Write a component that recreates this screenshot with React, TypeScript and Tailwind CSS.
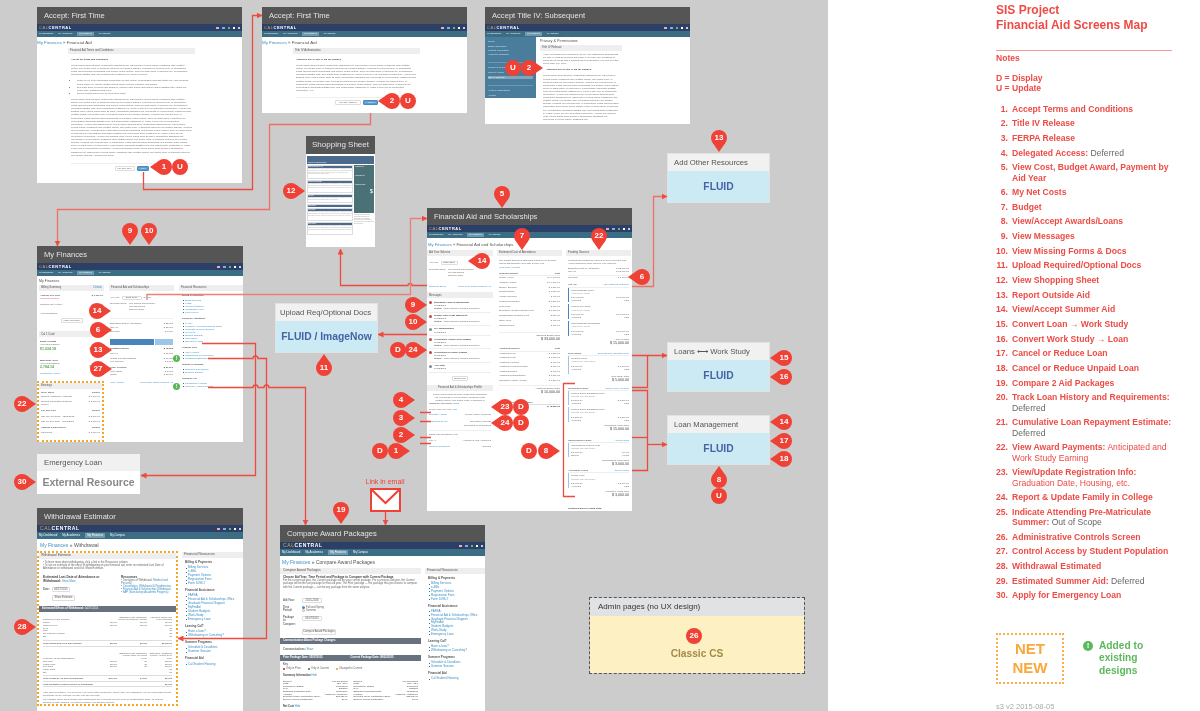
import React from 'react';
import clsx from 'clsx';

const LOREM =
  'Lorem ipsum dolor sit amet, consectetur adipiscing elit. Maecenas in viverra ipsum. Phasellus vitae porttitor metus, non auctor nulla. In tincidunt luctus mi non congue gravida. Vivamus nec pulvinar sem. In consectetur lectus rhoncus ligula malesuada, sed tempor neque dictum. Proin vel diam lacus, et rhoncus leo. Pellentesque accumsan sagittis eros, sed cursus tortor vestibulum in. Fusce a arcu nec mi elementum elementum. Aenean non sodales nunc. ';

const lorem = (n: number) => LOREM.repeat(Math.ceil(n / LOREM.length)).slice(0, n);

const Title: React.FC<{ children: React.ReactNode }> = ({ children }) => (
  <div className="h-[17px] shrink-0 bg-[#555555] pl-[7px] flex items-center text-[7.6px] text-[#e4e4e4]">
    {children}
  </div>
);

const CalNav: React.FC<{ large?: boolean }> = ({ large }) => (
  <div className="shrink-0">
    <div className="h-[7px] bg-[#2c3f66] flex items-center justify-between px-[1px]">
      <span className={clsx('font-bold tracking-[0.6px] text-white', large ? 'text-[5px] pl-[2px]' : 'text-[4px] pl-[1px]')}>
        <span className="font-normal text-[#c8a94e]">CAL</span>CENTRAL
      </span>
      <div className="flex items-center gap-[3px] pr-[1px]">
        <span className="w-[3px] h-[2px] bg-[#e6b0b0]" />
        <span className="w-[3px] h-[2px] bg-[#88aadd]" />
        <span className="w-[2px] h-[2px] bg-[#66bb66]" />
        <span className="w-[2px] h-[2px] bg-white" />
        <span className="w-[2px] h-[2px] rounded-full bg-white" />
      </div>
    </div>
    <div className={clsx('bg-[#3b6d85] flex items-center gap-[5px] pl-[2px] text-white', large ? 'h-[7px] text-[2.8px]' : 'h-[6px] text-[2.2px]')}>
      <span>My Dashboard</span>
      <span>My Academics</span>
      <span className="bg-[#6f9aad] px-[2px]">My Finances</span>
      <span>My Campus</span>
    </div>
  </div>
);

const Screen: React.FC<{ className: string; title: string; large?: boolean; children: React.ReactNode }> = ({
  className,
  title,
  large,
  children,
}) => (
  <div className={clsx('absolute bg-white overflow-hidden flex flex-col', className)}>
    <Title>{title}</Title>
    <CalNav large={large} />
    <div className="flex-1 min-h-0 text-[#666666] text-[2.4px] leading-[3.1px]">{children}</div>
  </div>
);

const Head: React.FC<{ right?: string; children: React.ReactNode; className?: string }> = ({ right, children, className }) => (
  <div className={clsx('h-[6px] bg-[#eeeeee] flex items-center justify-between px-[2px] text-[2.8px] text-[#555555]', className)}>
    <span>{children}</span>
    {right && <span className="text-[#3b8ec4]">{right}</span>}
  </div>
);

const Row: React.FC<{ l: string; r?: string; className?: string }> = ({ l, r, className }) => (
  <div className={clsx('flex justify-between', className)}>
    <span>{l}</span>
    <span>{r}</span>
  </div>
);

const Btn: React.FC<{ children: React.ReactNode; blue?: boolean; className?: string }> = ({ children, blue, className }) => (
  <span
    className={clsx(
      'inline-flex items-center justify-center rounded-[1px] border',
      blue ? 'bg-[#5a9bd0] border-[#4a8bc0] text-white' : 'bg-white border-[#dddddd] text-[#555555]',
      className,
    )}
  >
    {children}
  </span>
);

type Group = { name: string; links: string[] };

const Resources: React.FC<{ groups: Group[]; className?: string; headClass?: string }> = ({ groups, className, headClass }) => (
  <div className={className}>
    <Head className={headClass}>Financial Resources</Head>
    <div className="px-[3px] pt-[3px] flex flex-col gap-[3px]">
      {groups.map((g) => (
        <div key={g.name}>
          <div className="font-bold text-[#555555] mb-[1.5px]">{g.name}</div>
          {g.links.map((link) => (
            <div key={link} className="pl-[1px] flex items-center gap-[1px] text-[#3b8ec4]">
              <span className="w-[1px] h-[1px] bg-[#3b6d85] shrink-0" />
              {link}
            </div>
          ))}
        </div>
      ))}
    </div>
  </div>
);

const billing = { name: 'Billing & Payments', links: ['Billing Services', 'e-Bills', 'Payment Options', 'Registration Fees', 'Form 1098-T'] };
const assistance = {
  name: 'Financial Assistance',
  links: ['FAFSA', 'Financial Aid & Scholarships Office', 'Graduate Financial Support', 'MyFinAid', 'Student Budgets', 'Work-Study', 'Emergency Loan'],
};
const summer = { name: 'Summer Programs', links: ['Schedule & Deadlines', 'Summer Session'] };
const largeGroups = [
  billing,
  assistance,
  { name: 'Leaving Cal?', links: ['Have a loan?', 'Withdrawing or Canceling?'] },
  summer,
  { name: 'Financial Aid', links: ['Cal Student Housing'] },
];

const AcceptScreen = () => (
  <Screen className="left-[37px] top-[7px] w-[205px] h-[176px]" title="Accept: First Time">
    <div className="pt-[3px] text-[4.4px] leading-[6px] text-[#555555]">
      <span className="text-[#3b8ec4]">My Finances</span> » Financial Aid
    </div>
    <div className="ml-[31px] w-[127px] mt-[2px]">
      <Head>Financial Aid Terms and Conditions</Head>
      <div className="px-[3px] pt-[4px]">
        <div className="font-bold text-[#444444]">Accept the terms and conditions</div>
        <p className="mt-[3px]">{lorem(400)}</p>
        <ul className="mt-[3px] pl-[6px] list-disc">
          <li>Fusce eu mi et mi malesuada elementum ac vitae ipsum. Pellentesque imperdiet tortor elit, vitae tincidunt purus ornare eu. Integer mattis est sed ipsum pulvinar euismod. Sed finibus.</li>
          <li>Sed enim dolor, eleifend eget finibus in, ultricies vitae ipsum. Sed dictum augue sagittis ante, varius nec lorem vitae, sagittis cursus nunc.</li>
          <li>Donec condimentum arcu id elementum porta.</li>
        </ul>
        <p className="mt-[3px]">{lorem(2000)}</p>
        <div className="mt-[6px] mb-[3px] border-t border-[#eeeeee] pt-[2px] flex justify-center gap-[2px] text-[2.2px]">
          <Btn className="w-[20px] h-[5px]">I Do Not Agree</Btn>
          <Btn blue className="w-[12px] h-[5px]">I Agree</Btn>
        </div>
      </div>
    </div>
  </Screen>
);

const AuthorizeScreen = () => (
  <Screen className="left-[262px] top-[7px] w-[205px] h-[106px]" title="Accept: First Time">
    <div className="pt-[3px] text-[4.4px] leading-[6px] text-[#555555]">
      <span className="text-[#3b8ec4]">My Finances</span> » Financial Aid
    </div>
    <div className="ml-[31px] w-[127px] mt-[2px]">
      <Head>Title IV Authorization</Head>
      <div className="px-[3px] pt-[4px]">
        <div className="font-bold text-[#444444]">Authorize use of Title IV aid for charges</div>
        <p className="mt-[3px]">{lorem(880)}</p>
        <div className="mt-[5px] border-t border-[#eeeeee] pt-[2px] flex justify-end gap-[2px] text-[2.2px] pr-[39px]">
          <Btn className="w-[26px] h-[5px]">I Do Not Authorize</Btn>
          <Btn blue className="w-[15px] h-[5px]">I Authorize</Btn>
        </div>
      </div>
    </div>
  </Screen>
);

const TitleFourScreen = () => (
  <Screen className="left-[485px] top-[7px] w-[205px] h-[117px]" title="Accept Title IV: Subsequent">
    <div className="flex h-full">
      <div className="w-[51px] h-[61px] bg-[#4a7c9c] text-[#d4e4ee] px-[3px] pt-[3px] flex flex-col">
        <div>Profile</div>
        <div className="mt-[2px]">Basic Information</div>
        <div className="mt-[1px]">Contact Information</div>
        <div className="mt-[1px]">Academic Standing</div>
        <div className="mt-[6px] border-t border-[#6a98b4] pt-[3px]">Privacy &amp; Permissions</div>
        <div className="mt-[2px]">Recent Access</div>
        <div className="mt-[1px] bg-[#7da5bc] text-white">Title IV Release</div>
        <div className="mt-[6px] border-t border-[#6a98b4] pt-[3px]">Alerts &amp; Notifications</div>
        <div className="mt-[2px]">Access</div>
      </div>
      <div className="ml-[4px] w-[82px]">
        <div className="pt-[1px] text-[3.8px] leading-[6px] text-[#555555]">Privacy &amp; Permissions</div>
        <Head className="mt-[1px]">Title IV Release</Head>
        <p className="mt-[2px] px-[3px]">I have not authorized UC Berkeley to pay non-institutional charges with my Title IV program financial aid funds. If you have any questions or would like to speak with a financial aid representative, feel free to reach out at (510) 664-9181.</p>
        <div className="mt-[3px] px-[6px] font-bold text-[#444444]">Authorize use of Title IV aid for charges:</div>
        <p className="mt-[3px] px-[3px]">{lorem(1000)}</p>
      </div>
    </div>
  </Screen>
);

const ShoppingSheet = () => (
  <div className="absolute left-[306px] top-[136px] w-[69px] h-[111px] bg-white flex flex-col overflow-hidden">
    <div className="h-[18px] shrink-0 bg-[#555555] flex items-center justify-center text-[8px] text-[#e4e4e4]">Shopping Sheet</div>
    <div className="px-[1px] pt-[2px] text-[1.3px] leading-[1.8px] text-[#aaaaaa]">
      <div className="h-[8px] bg-[#4c6a8c] text-white px-[1px] flex items-end">University of California, Berkeley</div>
      <div className="mt-[1px] grid grid-cols-[46px_1fr] gap-[1px]">
        <div className="flex flex-col gap-[1px]">
          {[
            { name: 'Costs in the 2015-16 year', height: 'h-[14px]', size: 260 },
            { name: 'Grants and scholarships', height: 'h-[13px]', size: 230 },
            { name: 'Net costs', height: 'h-[9px]', size: 130 },
            { name: 'Work options', height: 'h-[3px]', size: 0 },
            { name: 'Loan options', height: 'h-[13px]', size: 230 },
            { name: 'Other options', height: 'h-[13px]', size: 230 },
          ].map((card) => (
            <div key={card.name} className={clsx('border border-[#dddddd]', card.height)}>
              <div className="bg-[#4c6a8c] text-white h-[2px] leading-[2px]">{card.name}</div>
              <div>{lorem(card.size)}</div>
            </div>
          ))}
        </div>
        <div>
          <div className="h-[48px] bg-[#4a7276] text-white p-[1px] flex flex-col">
            <span>Graduation rate</span>
            <span className="mt-[7px]">Loan default rate</span>
            <span className="mt-[7px]">Median borrowing</span>
            <span className="mt-[3px] self-end text-[6px] leading-[7px]">$</span>
          </div>
          <div className="mt-[1px] text-[#999999]">{lorem(170)}</div>
        </div>
      </div>
    </div>
  </div>
);

const MyFinances = () => (
  <Screen className="left-[37px] top-[246px] w-[206px] h-[196px]" title="My Finances">
    <div className="px-[2px] pt-[3px] text-[3.6px] leading-[5px] text-[#555555]">My Finances</div>
    <div className="grid grid-cols-[65px_65px_1fr] gap-[5px] pl-[2px] mt-[1px]">
      <div>
        <Head right="Details">Billing Summary</Head>
        <div className="px-[1px] pt-[3px]">
          <Row l="Amount Due Now" r="$ 1,000.00" className="font-bold" />
          <div className="text-[#dd5555]">Includes Past Due</div>
          <Row l="Charges Not Yet Due" r="$ 1,200.00" className="mt-[3px]" />
          <Row l="Account Balance" r="$ 2,200.00" className="mt-[6px]" />
          <div className="mt-[3px] flex justify-center">
            <Btn className="w-[22px] h-[5px]">Make Payment</Btn>
          </div>
        </div>
        <Head className="mt-[8px]">Cal 1 Card</Head>
        <div className="px-[1px] pt-[3px]">
          <div className="font-bold text-[#444444]">Debit Account</div>
          <div>Your bank balance</div>
          <Row l="$1,024.18" r="Manage" className="mt-[1px] text-[3.6px] text-[#55aa55] font-bold" />
          <div className="mt-[8px] font-bold text-[#444444]">Meal Plan / Flex</div>
          <div>Your meal balance</div>
          <Row l="2,784.14" r="Manage" className="mt-[1px] text-[3.6px] text-[#55aa55] font-bold" />
          <div className="mt-[3px] text-[#3b8ec4]">Transaction History</div>
        </div>
        <div className="mt-[6px] h-[61px] -ml-[2px] w-[67px] border-2 border-dotted border-[#f5a623]">
          <Head>Earnings</Head>
          <div className="px-[2px] pt-[2px]">
            <Row l="Work-study" r="Earned" className="font-bold" />
            <Row l="Student Assistance Associate" r="$ 7,000.00" className="mt-[1px]" />
            <Row l="Student Information Systems" r="$ 2,000.00" className="mt-[2px]" />
            <div>Project</div>
            <Row l="GSI and GSR" r="Earned" className="mt-[3px] font-bold" />
            <Row l="GSI Jan-Jun 2015 - 12/15/2015" r="$ 2,000.00" className="mt-[2px]" />
            <Row l="GSI Jul-Dec 2015 - 12/15/2015" r="$ 2,000.00" className="mt-[2px]" />
            <Row l="Campus Employment" r="Earned" className="mt-[3px] font-bold" />
            <Row l="Cal Dining" r="$ 1,000.00" className="mt-[2px]" />
          </div>
        </div>
      </div>
      <div>
        <Head>Financial Aid and Scholarships</Head>
        <div className="px-[1px] pt-[5px]">
          <div className="flex items-center gap-[2px]">
            <span>Aid Year:</span>
            <Btn className="w-[20px] h-[4px]">2015-2016</Btn>
            <span className="text-[#3b8ec4]">Details</span>
          </div>
          <div className="mt-[2px] flex gap-[2px]">
            <span>Semester/Term:</span>
            <div>
              <div>Fall, Spring and Summer</div>
              <div>Fall and Spring</div>
              <div>Summer 2015</div>
            </div>
          </div>
          <div className="mt-[7px] border-t border-[#eeeeee] pt-[3px]">
            <Row l="Estimated Cost of Attendance" r="$ 32,000" />
            <Row l="Gift Aid" r="- $ 15,000" className="mt-[1px]" />
            <Row l="Net Cost" r="$ 8,000" className="mt-[1px]" />
          </div>
          <div className="mt-[5px] flex h-[6px] gap-[1px]">
            <div className="w-[44px] bg-[#4a84bc]" />
            <div className="flex-1 bg-[#9cc6e8]" />
          </div>
          <Row l="Funding Offered" r="$ 45,000" className="mt-[2px] font-bold text-[#444444]" />
          <Row l="Gift Aid" r="$ 15,000" className="mt-[2px]" />
          <Row l="Grants and Scholarships" r="$ 10,000" className="mt-[2px]" />
          <Row l="Fee Waivers" r="$ 5,000" />
          <Row l="Other Funding" r="$ 20,000" className="mt-[3px] font-bold" />
          <Row l="Work Study" r="$ 5,000" className="mt-[1px]" />
          <Row l="Loans" r="$ 15,000" />
          <Row l="View Awards" r="Learn more about Financial Aid" className="mt-[5px] text-[#3b8ec4]" />
        </div>
      </div>
      <Resources
        groups={[
          billing,
          assistance,
          { name: 'Leaving Cal?', links: ['Have a loan?', 'Withdrawing or Canceling?', 'Withdrawal Estimator'] },
          summer,
          { name: 'Financial Aid', links: ['Cal Student Housing', 'Compare Award Packages'] },
        ]}
      />
    </div>
  </Screen>
);

const Message: React.FC<{ title: string; date: string; status?: boolean; done?: boolean }> = ({ title, date, status, done }) => (
  <div className="flex gap-[2px] border-b border-[#eeeeee] py-[1.5px]">
    <span className={clsx('mt-[0.5px] w-[3px] h-[3px] rounded-full shrink-0', done ? 'bg-[#888888]' : 'bg-[#c04848]')} />
    <div>
      <div className="font-bold text-[#444444]">{title}</div>
      <div>{date}</div>
      {status && <div><b>Status:</b> Action required, missing document</div>}
    </div>
  </div>
);

const LINK_HEAD = '[&>span:first-child]:font-bold [&>span:last-child]:text-[#3b8ec4]';
const LINK_LEFT = '[&>span:first-child]:text-[#3b8ec4]';

const FinancialAid = () => (
  <Screen className="left-[427px] top-[208px] w-[205px] h-[303px]" title="Financial Aid and Scholarships">
    <div className="px-[1px] pt-[4px] text-[4.2px] leading-[6px] text-[#555555]">
      <span className="text-[#3b8ec4]">My Finances</span> » Financial Aid and Scholarships
    </div>
    <div className="grid grid-cols-[66px_65px_65px] gap-[4px] mt-[2px]">
      <div>
        <Head>Aid Year Selector</Head>
        <div className="px-[2px] pt-[5px]">
          <div className="flex items-center gap-[2px]">
            <span>Aid Year:</span>
            <Btn className="w-[17px] h-[4px]">2015-2016</Btn>
          </div>
          <div className="mt-[3px] flex gap-[2px]">
            <span>Semester/Term:</span>
            <div>
              <div>Fall, Spring and Summer</div>
              <div>Fall and Spring</div>
              <div>Summer 2015</div>
            </div>
          </div>
          <Row l="Shopping Sheet" r="Learn more about Financial Aid" className="mt-[8px] text-[#3b8ec4]" />
        </div>
        <Head className="mt-[4px]">Messages</Head>
        <div className="px-[2px] pt-[1px]">
          <Message title="Education Loan on Bankruptcy" date="07/22/2015" status />
          <Message title="Eligible Non-Grant Statement" date="07/22/2015" status />
          <Message title="Pre-Immunization" date="07/22/2015" done />
          <Message title="Verification Action Form Change" date="07/22/2015" status />
          <Message title="Verification for Name Change" date="07/22/2015" status />
          <Message title="Aid Letter" date="07/22/2015" done />
          <div className="mt-[3px] flex justify-center">
            <Btn className="w-[16px] h-[5px]">Show More</Btn>
          </div>
        </div>
        <Head className="mt-[4px] justify-center">Financial Aid &amp; Scholarships Profile</Head>
        <div className="px-[2px] pt-[2px]">
          <p className="px-[4px] text-center">{lorem(150)}</p>
          <div className="font-bold">Financial Aid Profile: <span className="text-[#3b8ec4] font-normal">Show</span></div>
          <div className="mt-[3px]">Privacy and Aid Year: <span className="text-[#3b8ec4]">Hide</span></div>
          <Row l="Delegate Access" r="Include Family Members" className={clsx('mt-[2px]', LINK_LEFT)} />
          <Row l="Authorized to Pay" r="Operating Accounts" className={clsx('mt-[4px]', LINK_LEFT)} />
          <div className="text-right">Delegated on 07/20/2015</div>
          <div className="mt-[3px] border-t border-[#eeeeee] pt-[2px]">Notes and Conditions: <span className="text-[#3b8ec4]">Hide</span></div>
          <Row l="Title IV" r="Authorized, Not Authorized" className={clsx('mt-[3px]', LINK_LEFT)} />
          <Row l="Terms & Conditions" r="Accepted" className={clsx('mt-[3px]', LINK_LEFT)} />
        </div>
      </div>
      <div>
        <Head>Estimated Cost of Attendance</Head>
        <div className="px-[2px] pt-[3px]">
          <p>The budget amount is estimated based on an average cost of attending the university for the year.</p>
          <div className="mt-[1px] text-[#3b8ec4]">View Term Amounts</div>
          <Row l="Standard Budget" r="Cost" className="mt-[3px] border-b border-[#eeeeee] font-bold" />
          {[
            ['Tuition / Fees', '$ 14,000.00'],
            ['Housing / Meals', '$ 14,000.00'],
            ['Books / Supplies', '$ 1,200.00'],
            ['Transportation', '$ 1,300.00'],
            ['Health Insurance', '$ 900.00'],
            ['Personal Expenses', '$ 1,500.00'],
            ['Loan Fees', '$ 100.00'],
            ['Education Abroad Program Fees', '$ 1,000.00'],
            ['Relationships Program Fees', '$ 500.00'],
            ['Other Fees', '$ 100.00'],
            ['Miscellaneous', '$ 100.00'],
          ].map(([l, r], i) => (
            <Row key={l} l={l} r={r} className={clsx('h-[4.5px]', i % 2 === 1 && 'mb-[0.5px]')} />
          ))}
          <div className="mt-[4px] border-t border-[#eeeeee] pt-[1px] text-right">Standard Budget Total</div>
          <div className="text-right text-[3.6px] leading-[4px] text-[#444444]">$ 33,000.00</div>
          <Row l="Additional Budget" r="Cost" className="mt-[6px] border-b border-[#eeeeee] font-bold" />
          {[
            ['Additional Fees', '$ 1,200.00'],
            ['Additional Food', '$ 1,000.00'],
            ['Additional Housing', '$ 900.00'],
            ['Additional Living Expenses', '$ 800.00'],
            ['Additional Tuition', '$ 900.00'],
            ['Additional Transportation', '$ 1,200.00'],
            ['Relocation / Study Abroad', '$ 1,200.00'],
          ].map(([l, r]) => (
            <Row key={l} l={l} r={r} className="h-[4.5px]" />
          ))}
          <div className="mt-[2px] border-t border-[#eeeeee] pt-[1px] text-right">Additional Budget Total</div>
          <div className="text-right text-[3.6px] leading-[4px] text-[#444444]">$ 10,000.00</div>
          <div className="mt-[7px] font-bold">Estimated Cost of Attendance</div>
          <Row l="" r="$ 43,000.00" className="border-t border-[#dddddd] text-[#444444] font-bold" />
        </div>
      </div>
      <div>
        <Head>Funding Sources</Head>
        <div className="px-[2px] pt-[3px]">
          <p>Financial aid awards are offered to meet your total cost. Accept awards to apply them to your account.</p>
          <Row l="Estimated Cost of Attendance" r="$ 32,000.00" className="mt-[2px]" />
          <Row l="Gift Aid" r="- $ 15,000.00" />
          <Row l="Net Cost" r="$ 8,000.00" className="mt-[2px] border-t border-[#eeeeee]" />
          <Row l="Gift Aid" r="Add Additional Resource" className={clsx('mt-[4px] border-b border-[#eeeeee]', LINK_HEAD)} />
          {['Undergraduate Grant', 'Federal Pell Grant', 'Undergraduate Scholarship'].map((name) => (
            <div key={name} className="border-l border-[#4a84bc] pl-[2px] pt-[1px] mb-[2.5px]">
              <div>{name}</div>
              <div className="text-[#999999]">Award type: grant</div>
              <Row l="$ 10,000.00" r="$ 10,000.00" className="mt-[1px]" />
              <Row l="Accepted" r="Paid" />
            </div>
          ))}
          <div className="text-right">Gift Aid Total</div>
          <div className="text-right text-[3.6px] leading-[4px] text-[#444444]">$ 15,000.00</div>
          <Row l="Work Study" r="Earnings and Activation Form" className={clsx('mt-[7px] border-b border-[#eeeeee]', LINK_HEAD)} />
          <div className="border-l border-[#9cc6e8] pl-[2px] pt-[1px] pb-[3px]">
            <div>Physical World</div>
            <div className="text-[#999999]">Award type: work study</div>
            <Row l="$ 5,000.00" r="$ 5,000.00" className="mt-[1px]" />
            <Row l="Accepted" r="Paid" />
          </div>
          <div className="mt-[1px] text-right">Work Study Total</div>
          <div className="text-right text-[3.6px] leading-[4px] text-[#444444]">$ 5,000.00</div>
          <Row l="Subsidized Loans" r="Cancel Loan / Convert" className={clsx('mt-[5px] border-b border-[#eeeeee]', LINK_HEAD)} />
          {['Federal Direct Subsidized Loan', 'Federal Direct Subsidized Loan'].map((name, i) => (
            <div key={i} className="border-l border-[#9cc6e8] pl-[2px] pt-[1px] mb-[2px]">
              <div>{name}</div>
              <div className="text-[#999999]">Interest rate and terms</div>
              <Row l="$ 5,500.00" r="$ 5,500.00" className="mt-[1px]" />
              <Row l="Accepted" r="Paid" />
            </div>
          ))}
          <div className="text-right">Subsidized Loans Total</div>
          <div className="text-right text-[3.6px] leading-[4px] text-[#444444]">$ 15,000.00</div>
          <Row l="Unsubsidized Loans" r="Accept Loans" className={clsx('mt-[8px] border-b border-[#eeeeee]', LINK_HEAD)} />
          <div className="border-l border-[#9cc6e8] pl-[2px] pt-[1px]">
            <div>Unsubsidized Federal Loan</div>
            <div className="text-[#999999]">Interest rate and terms</div>
            <Row l="$ 3,000.00" r="$ 0.00" className="mt-[1px]" />
            <Row l="Offered" r="Accept" />
          </div>
          <div className="mt-[2px] text-right">Unsubsidized Loans Total</div>
          <div className="text-right text-[3.6px] leading-[4px] text-[#444444]">$ 3,000.00</div>
          <Row l="Alternative Loans" r="Cancel Loans" className={clsx('mt-[3px] border-b border-[#eeeeee]', LINK_HEAD)} />
          <div className="border-l border-[#9cc6e8] pl-[2px] pt-[1px]">
            <div>Private Loan</div>
            <div className="text-[#999999]">Interest rate and terms</div>
            <Row l="$ 3,000.00" r="$ 3,000.00" className="mt-[1px]" />
            <Row l="Accepted" r="Paid" />
          </div>
          <div className="mt-[2px] text-right">Alternative Loans Total</div>
          <div className="text-right text-[3.6px] leading-[4px] text-[#444444]">$ 3,000.00</div>
          <div className="mt-[10px] font-bold text-[#444444]">Funding Sources Grand Total</div>
        </div>
      </div>
    </div>
  </Screen>
);

const Cols4: React.FC<{ cells: string[]; className?: string }> = ({ cells, className }) => (
  <div className={clsx('grid grid-cols-[52px_22px_30px_1fr]', className)}>
    <span>{cells[0]}</span>
    <span className="text-right">{cells[1]}</span>
    <span className="text-right">{cells[2]}</span>
    <span className="text-right">{cells[3]}</span>
  </div>
);

const Withdrawal = () => (
  <Screen large className="left-[37px] top-[508px] w-[206px] h-[203px]" title="Withdrawal Estimator">
    <div className="px-[3px] pt-[3px] text-[5px] leading-[7px] text-[#555555]">
      <span className="text-[#3b8ec4]">My Finances</span> » Withdrawal
    </div>
    <div className="flex gap-[4px] mt-[2px] text-[2.7px] leading-[3.2px]">
      <div className="w-[141px] border-2 border-dotted border-[#f5a623]">
        <Head className="text-[3.2px]">Withdrawal Estimator</Head>
        <div className="px-[4px] pt-[2px]">
          <div>• To learn more about withdrawing, click a link in the Resources column.</div>
          <div>• To see an estimate of the effect of withdrawing on your financial aid, enter an estimated Last Date of Attendance or withdrawal and click Show Estimate.</div>
          <div className="mt-[4px] flex gap-[11px]">
            <div className="w-[67px] shrink-0">
              <div className="font-bold text-[3.2px] leading-[4px] text-[#444444]">Estimated Last Date of Attendance or Withdrawal: <span className="font-normal text-[#3b8ec4] text-[2.7px]">Show More</span></div>
              <div className="mt-[3px] flex items-center gap-[2px]">
                <b>Date:</b>
                <Btn className="w-[18px] h-[5px]">04/27/2015</Btn>
              </div>
              <div className="mt-[3px] pl-[9px]">
                <Btn className="w-[23px] h-[6px]">Show Estimate</Btn>
              </div>
            </div>
            <div>
              <div className="font-bold text-[3.2px] leading-[4px] text-[#444444]">Resources</div>
              <div>• Two types of Withdrawal: <span className="text-[#3b8ec4]">Medical and Personal</span></div>
              <div>• <span className="text-[#3b8ec4]">Cancellation, Withdrawal &amp; Readmission</span></div>
              <div>• <span className="text-[#3b8ec4]">Financial Aid &amp; Scholarships Withdrawal</span></div>
              <div>• <span className="text-[#3b8ec4]">SAP (Satisfactory Academic Progress)</span></div>
            </div>
          </div>
        </div>
        <div className="mt-[5px] h-[6px] bg-[#67727e] text-white font-bold px-[3px] flex items-center">Estimated Effects of Withdrawal: <span className="font-normal ml-[1px]">04/27/2015</span></div>
        <div className="px-[4px] pt-[4px] text-[2.3px] leading-[2.8px]">
          <Cols4 cells={['', '', 'Estimated Post-Withdrawal Amount (Remaining Amount)', 'Amount of Tuition and Fees Refunded']} />
          <div className="mt-[-3px]">Tuition/Fees and Charges</div>
          {['Tuition', 'Campus Fees', 'SHIP', 'NRT', 'On-Campus Housing', 'Etc.'].map((name, i) => (
            <Cols4 key={name} cells={[name, i < 2 ? '$5,000' : '', i < 2 ? '$3,000' : '', i < 2 ? '-$2,000' : '$0']} />
          ))}
          <Cols4 cells={['Total Tuition and Fees and Charges', '$6,000', '$3,000', '-$3,000.00']} className="mt-[2px] py-[1px] border-y border-[#dddddd] font-bold" />
          <Cols4 className="mt-[5px]" cells={['', '', 'Estimated Post-Withdrawal Amount (what you would keep)', 'Estimated Adjustment Amount (Amount to be paid)']} />
          <div className="mt-[-3px]">Financial Aid and Scholarships</div>
          {['Sub Loan', 'Unsub Loan', 'Pell Grant', 'UGSI Grant', 'Etc.'].map((name, i) => (
            <Cols4 key={name} cells={[name, i < 3 ? '$2,500' : '', i < 3 ? '$0' : '', i < 3 ? '-$2,500' : '$0']} />
          ))}
          <Cols4 cells={['Total Financial Aid and Scholarships', '$10,000', '$4,000', '-$6,000']} className="mt-[1px] py-[1px] border-y border-[#dddddd] font-bold" />
          <Row l="Post-Estimated Financial Effect of Withdrawal" r="-$6,000" className="py-[1px] border-b border-[#dddddd] font-bold" />
          <p className="mt-[4px]">If the effect is negative, you will receive an invoice from UC Berkeley shortly after your withdrawal. You are encouraged to plan accordingly for any invoices you may owe the University.</p>
          <p className="mt-[1px]">The estimate above does not take into consideration any expenses you may incur for transportation home, off-campus housing, or other charges. You should consider your situation carefully.</p>
        </div>
      </div>
      <Resources className="flex-1 bg-white text-[3px] leading-[3.9px]" headClass="text-[3.4px] mt-[1px]" groups={largeGroups} />
    </div>
  </Screen>
);

const Compare = () => (
  <Screen large className="left-[280px] top-[525px] w-[205px] h-[186px]" title="Compare Award Packages">
    <div className="px-[2px] pt-[3px] text-[5px] leading-[7px] text-[#555555]">
      <span className="text-[#3b8ec4]">My Finances</span> » Compare Award Packages
    </div>
    <div className="flex gap-[4px] mt-[2px] text-[2.7px] leading-[3.2px]">
      <div className="w-[141px]">
        <Head className="text-[3.2px] pl-[3px]">Compare Award Packages</Head>
        <div className="px-[3px] pt-[2px]">
          <div className="font-bold text-[3px] text-[#444444]">Choose Aid Year, Time Period and Package to Compare with Current Package</div>
          <p>For the current aid year, the Current package will be your current package. For a previous aid year, the Current package will be the last package for that aid year. The Prior package — the package that you choose to compare with the Current package — can be any package from the same aid year.</p>
          <div className="mt-[9px] flex gap-[6px] items-center">
            <b className="w-[13px]">Aid Year:</b>
            <Btn className="w-[20px] h-[5px]">2015-2016</Btn>
          </div>
          <div className="mt-[3px] flex gap-[6px]">
            <b className="w-[13px]">Time Period:</b>
            <div>
              <div className="flex items-center gap-[1px]"><span className="w-[3px] h-[3px] rounded-full bg-[#4a90d0]" />Fall and Spring</div>
              <div className="flex items-center gap-[1px]"><span className="w-[3px] h-[3px] rounded-full border border-[#aaaaaa]" />Summer</div>
            </div>
          </div>
          <div className="mt-[4px] flex gap-[6px]">
            <b className="w-[13px]">Package to Compare:</b>
            <Btn className="w-[20px] h-[5px]">05/07/2015</Btn>
          </div>
          <div className="mt-[3px] ml-[19px]">
            <Btn className="w-[34px] h-[6px]">Compare Award Packages</Btn>
          </div>
        </div>
        <div className="mt-[3px] h-[6px] bg-[#67727e] text-white font-bold px-[3px] flex items-center">Communication About Package Changes</div>
        <div className="px-[3px] py-[4px]"><b>Communications:</b> <span className="text-[#3b8ec4]">Show</span></div>
        <div className="h-[6px] bg-[#67727e] text-white font-bold px-[3px] grid grid-cols-2 items-center">
          <span>Prior Package Date: 05/07/2015</span>
          <span>Current Package Date: 08/02/2015</span>
        </div>
        <div className="px-[3px] pt-[2px]">
          <b>Key</b>
          <div className="flex gap-[7px] mt-[1px]">
            <span className="flex items-center gap-[1px]"><span className="w-[2px] h-[2px] bg-[#dd5555]" />Only in Prior</span>
            <span className="flex items-center gap-[1px]"><span className="w-[2px] h-[2px] bg-[#55aa55]" />Only in Current</span>
            <span className="flex items-center gap-[1px]"><span className="w-[2px] h-[2px] bg-[#ddbb55]" />Changed in Current</span>
          </div>
          <div className="mt-[4px] font-bold text-[#444444]">Summary Information <span className="font-normal text-[#3b8ec4]">Hide</span></div>
          <div className="mt-[2px] grid grid-cols-2 gap-[6px] text-[2.3px] leading-[2.6px] text-[#444444]">
            {[0, 1].map((col) => (
              <div key={col}>
                <Row l="Enrolled" r="Fall and Spring" />
                <Row l="Units:" r="12.0 / 12.0" />
                <Row l="Dependency Status:" r="Dependent" />
                <Row l="SAP:" r="Satisfied" />
                <Row l="Estimated Graduation Date:" r="05/15/2016" />
                <Row l="Housing:" r="Apartment / Residence" />
                <Row l="Expected Family Contribution (EFC):" r="$12,120.00" />
                <Row l="Berkeley Parent Contribution:" r="$0.00" />
              </div>
            ))}
          </div>
          <div className="mt-[5px] font-bold text-[#444444]">Net Cost <span className="font-normal text-[#3b8ec4]">Hide</span></div>
        </div>
      </div>
      <Resources className="flex-1 bg-white text-[3px] leading-[3.85px]" headClass="text-[3.4px]" groups={largeGroups} />
    </div>
  </Screen>
);

const FluidCard: React.FC<{ className: string; title: string; body: string; titleClass?: string }> = ({ className, title, body, titleClass }) => (
  <div className={clsx('absolute flex flex-col h-[50px] w-[103px] border border-[#e2e2e2]', className)}>
    <div className={clsx('h-[17px] shrink-0 bg-[#f1f1f1] flex items-center text-[7.7px] text-[#555555]', titleClass ?? 'pl-[6px]')}>{title}</div>
    <div className="flex-1 bg-[#cbeaf4] flex items-center justify-center text-[10.3px] font-bold text-[#4563a5]">{body}</div>
  </div>
);

const PIN_DIRS = {
  left: 'rotate-0',
  up: 'rotate-90',
  right: 'rotate-180',
  down: '-rotate-90',
};

const Pin: React.FC<{ className: string; label?: string; dir?: keyof typeof PIN_DIRS }> = ({ className, label, dir }) => (
  <div className={clsx('absolute w-4 h-4 rounded-full bg-[#ef4136] flex items-center justify-center text-[8px] font-bold text-white', className)}>
    {dir && (
      <svg viewBox="0 0 16 16" className={clsx('absolute inset-0 w-4 h-4 overflow-visible', PIN_DIRS[dir])}>
        <polygon points="-6,8 3.4,1.4 3.4,14.6" fill="#ef4136" />
      </svg>
    )}
    <span className="relative">{label}</span>
  </div>
);

const GreenMark: React.FC<{ className: string }> = ({ className }) => (
  <div className={clsx('absolute w-[7px] h-[7px] rounded-full bg-[#5cb85c] flex items-center justify-center text-[5px] leading-none font-bold text-white', className)}>!</div>
);

const Connectors = () => (
  <svg viewBox="0 0 828 711" className="absolute left-0 top-0 w-[828px] h-[711px] pointer-events-none" fill="none">
    <defs>
      <marker id="head" viewBox="0 0 6 6" refX="5.5" refY="3" markerWidth="6" markerHeight="6" orient="auto" markerUnits="userSpaceOnUse">
        <path d="M0 0 L6 3 L0 6 Z" fill="#ef4a3f" />
      </marker>
    </defs>
    <g stroke="#ef4a3f" strokeWidth="1.3">
      <path d="M143.5 172 V189.5 H252.5 V15.5 H262" markerEnd="url(#head)" />
      <path d="M370.5 113 V124.5 H269.5 V209.5 H57.5 V246" stroke="#ee6f66" markerEnd="url(#head)" />
      <path d="M427 285.5 H412 a2 2 0 0 0 -4 0 H340.5 V249" markerEnd="url(#head)" />
      <path d="M147 300 V294.5 H410.5 V218.5 H427" stroke="#ee7f77" markerEnd="url(#head)" />
      <path d="M427 334.5 H378" markerEnd="url(#head)" />
      <path d="M202 343.5 H255.5 V475.5 H141" markerEnd="url(#head)" />
      <path d="M208 358.5 H253 a2.5 2.5 0 0 1 5 0 H266.5 V638.5 H178" markerEnd="url(#head)" />
      <path d="M208 387.5 H253 a2.5 2.5 0 0 1 5 0 H264 a2.5 2.5 0 0 1 5 0 H305.5 V525" markerEnd="url(#head)" />
      <path d="M385.5 512 V525" markerEnd="url(#head)" />
      <path d="M632 286.5 H653.5 V196.5 H667" stroke="#ee6f66" markerEnd="url(#head)" />
      <path d="M632 355.5 H667" markerEnd="url(#head)" />
      <path d="M632 387.5 H647.5 V355.5" />
      <path d="M632 390.5 H647.5 V470.5 H632" />
      <path d="M632 437.5 H647.5" />
      <path d="M647.5 444.5 H667" markerEnd="url(#head)" />
      <path d="M575 383.5 H563.5 V496.5 H575" />
      <path d="M420 412.5 H431 M420 421.5 H431 M420 437.5 H431 M420 443.5 H431" />
    </g>
  </svg>
);

const NOTES: { n: number; bold: string; rest?: string; gray?: boolean }[] = [
  { n: 1, bold: 'Accept Terms and Conditions' },
  { n: 2, bold: 'Title IV Release' },
  { n: 3, bold: 'FERPA Release' },
  { n: 4, bold: 'Delegated Access:', rest: 'Deferred', gray: true },
  { n: 5, bold: 'View Cost, Budget Award, Payment by Aid Year' },
  { n: 6, bold: 'My Net Costs' },
  { n: 7, bold: 'Budget' },
  { n: 8, bold: 'View/Accept Awards/Loans' },
  { n: 9, bold: 'View Messages' },
  { n: 10, bold: 'View Missing Forms & Docs' },
  { n: 11, bold: 'Upload Required/Optional Docs' },
  { n: 12, bold: 'View Shopping Sheet' },
  { n: 13, bold: 'Report Outside Aid' },
  { n: 14, bold: 'View/Accept Summer Aid' },
  { n: 15, bold: 'Convert Loan → Work Study' },
  { n: 16, bold: 'Convert Work Study → Loan' },
  { n: 17, bold: 'Cancel or Reduce Loan' },
  { n: 18, bold: 'Cancel or Reduce Unpaid Loan' },
  { n: 19, bold: 'Compare 2 Aid Packages' },
  { n: 20, bold: 'Track Loan History and Requirements:', rest: 'Deferred', gray: true },
  { n: 21, bold: 'Cumulative Loan Repayment Estimate:', rest: 'Deferred', gray: true },
  { n: 22, bold: 'View Award Payments:', rest: 'Anticipated and Work Study Earning' },
  { n: 23, bold: 'View/Update Registration Info:', rest: 'Graduation Date, Housing, etc.' },
  { n: 24, bold: 'Report & Update Family in College' },
  { n: 25, bold: 'Indicate Attending Pre-Matriculate Summer:', rest: 'Out of Scope', gray: true },
  { n: 26, bold: 'Administrative Controls Screen' },
  { n: 27, bold: 'Control Access by Student Population' },
  { n: 28, bold: 'Withdrawal Estimated' },
  { n: 29, bold: 'Estimated Summer Aid:', rest: 'Deferred', gray: true },
  { n: 30, bold: 'Apply for Emergency Loan' },
];

const Notes = () => (
  <div className="w-[372px] h-[711px] bg-white pl-[168px] pr-[28px] pt-[3px] text-[#ee4b45] flex flex-col">
    <h1 className="text-[12px] leading-[15px] font-bold">
      SIS Project
      <br />
      Financial Aid Screens Map
    </h1>
    <div className="mt-[17px] h-px bg-[#f29a94]" />
    <div className="mt-[2px] text-[8.6px] leading-[10px] font-bold">Notes</div>
    <div className="mt-[10px] text-[8.6px] leading-[10.3px] font-bold">
      D = Display
      <br />U = Update
    </div>
    <ol className="mt-[10px] -mr-[2px] flex flex-col gap-[4.37px] text-[8.6px] leading-[10.3px]">
      {NOTES.map((note) => (
        <li key={note.n} className="flex">
          <span className="w-[12px] shrink-0 text-right font-bold">{note.n}.</span>
          <span className="ml-[4px]">
            <b>{note.bold}</b>
            {note.rest && (
              <span className={note.gray ? 'text-[#666666]' : undefined}> {note.rest}</span>
            )}
          </span>
        </li>
      ))}
    </ol>
    <div className="mt-[32px] flex">
      <div className="w-[68px] h-[51px] border-2 border-dotted border-[#f9b04a] flex items-center justify-center text-center text-[15px] leading-[19px] font-bold text-[#f9a83a]">
        NET
        <br />
        NEW
      </div>
      <div className="ml-[19px] flex gap-[6px] text-[#5cb85c] text-[10.2px] leading-[12.5px] font-bold pt-[7px]">
        <span className="mt-[1px] w-[10px] h-[10px] rounded-full bg-[#5cb85c] text-white text-[8px] leading-[10px] text-center">!</span>
        <span>
          Added to
          <br />
          existing
          <br />
          designs
        </span>
      </div>
    </div>
    <div className="mt-auto mb-[0px] text-[7.5px] leading-[9px] text-[#aaaaaa]">s3 v2 2015-08-05</div>
  </div>
);

const App: React.FC = () => (
  <div className="w-[1200px] h-[711px] flex overflow-hidden blur-[0.3px] font-['Liberation_Sans',Arial,sans-serif]">
    <div className="relative w-[828px] h-[711px] bg-[#cccccc] overflow-hidden">
      <AcceptScreen />
      <AuthorizeScreen />
      <TitleFourScreen />
      <ShoppingSheet />
      <MyFinances />
      <FinancialAid />
      <Withdrawal />
      <Compare />

      <FluidCard className="left-[275px] top-[303px]" titleClass="pl-[4px]" title="Upload Req/Optional Docs" body="FLUID / ImageNow" />
      <FluidCard className="left-[667px] top-[153px]" title="Add Other Resources" body="FLUID" />
      <FluidCard className="left-[667px] top-[342px]" title="Loans ⟷ Work Study" body="FLUID" />
      <FluidCard className="left-[667px] top-[415px]" title="Loan Management" body="FLUID" />

      <div className="absolute left-[37px] top-[454px] w-[103px] h-[40px] bg-white flex flex-col">
        <div className="h-[17px] bg-[#f1f1f1] pl-[7px] flex items-center text-[7.7px] text-[#555555]">Emergency Loan</div>
        <div className="flex-1 flex items-center justify-center text-[10.5px] font-bold text-[#888888]">External Resource</div>
      </div>

      <div className="absolute left-[589px] top-[597px] w-[216px] h-[77px] border border-dashed border-[#555555] flex flex-col">
        <div className="h-[18px] bg-[#e1e2e4] pl-[8px] flex items-center text-[8px] text-[#333333]">Admin pages (no UX design)</div>
        <div className="flex-1 bg-[#fdf1c4] flex items-end justify-center pb-[12px] text-[10.2px] font-bold text-[#a58948]">Classic CS</div>
      </div>

      <div className="absolute left-[345px] top-[477px] w-[80px] text-center text-[7px] leading-[9px] text-[#ef4136]">Link in email</div>
      <svg viewBox="0 0 31 24" className="absolute left-[370px] top-[488px] w-[31px] h-[24px]">
        <rect x="1" y="1" width="29" height="22" fill="white" stroke="#ef4136" strokeWidth="2" />
        <path d="M2 2 L15.5 15 L29 2" fill="none" stroke="#ef4136" strokeWidth="2" />
      </svg>

      <GreenMark className="left-[173px] top-[355px]" />
      <GreenMark className="left-[173px] top-[383px]" />

      <Connectors />

      <Pin className="left-[156px] top-[159px]" label="1" dir="left" />
      <Pin className="left-[172px] top-[159px]" label="U" />
      <Pin className="left-[384px] top-[93px]" label="2" dir="left" />
      <Pin className="left-[400px] top-[93px]" label="U" />
      <Pin className="left-[505px] top-[60px]" label="U" />
      <Pin className="left-[521px] top-[60px]" label="2" dir="right" />
      <Pin className="left-[283px] top-[183px]" label="12" dir="right" />
      <Pin className="left-[122px] top-[223px]" label="9" dir="down" />
      <Pin className="left-[141px] top-[223px]" label="10" dir="down" />
      <Pin className="left-[494px] top-[186px]" label="5" dir="down" />
      <Pin className="left-[711px] top-[130px]" label="13" dir="down" />
      <Pin className="left-[514px] top-[228px]" label="7" dir="down" />
      <Pin className="left-[591px] top-[228px]" label="22" dir="down" />
      <Pin className="left-[474px] top-[253px]" label="14" dir="left" />
      <Pin className="left-[89px] top-[303px]" label="14" dir="right" />
      <Pin className="left-[90px] top-[322px]" label="6" dir="right" />
      <Pin className="left-[90px] top-[342px]" label="13" dir="right" />
      <Pin className="left-[90px] top-[361px]" label="27" dir="right" />
      <Pin className="left-[14px] top-[396px]" label="22" dir="right" />
      <Pin className="left-[14px] top-[474px]" label="30" dir="right" />
      <Pin className="left-[14px] top-[619px]" label="28" dir="right" />
      <Pin className="left-[405px] top-[297px]" label="9" dir="right" />
      <Pin className="left-[405px] top-[314px]" label="10" dir="right" />
      <Pin className="left-[390px] top-[342px]" label="D" />
      <Pin className="left-[405px] top-[342px]" label="24" dir="right" />
      <Pin className="left-[393px] top-[392px]" label="4" dir="right" />
      <Pin className="left-[393px] top-[410px]" label="3" dir="right" />
      <Pin className="left-[393px] top-[427px]" label="2" dir="right" />
      <Pin className="left-[372px] top-[443px]" label="D" />
      <Pin className="left-[388px] top-[443px]" label="1" dir="right" />
      <Pin className="left-[497px] top-[399px]" label="23" dir="left" />
      <Pin className="left-[513px] top-[399px]" label="D" />
      <Pin className="left-[497px] top-[415px]" label="24" dir="left" />
      <Pin className="left-[513px] top-[415px]" label="D" />
      <Pin className="left-[521px] top-[443px]" label="D" />
      <Pin className="left-[538px] top-[443px]" label="8" dir="right" />
      <Pin className="left-[634px] top-[269px]" label="6" dir="left" />
      <Pin className="left-[776px] top-[350px]" label="15" dir="left" />
      <Pin className="left-[776px] top-[369px]" label="16" dir="left" />
      <Pin className="left-[776px] top-[414px]" label="14" dir="left" />
      <Pin className="left-[776px] top-[433px]" label="17" dir="left" />
      <Pin className="left-[776px] top-[451px]" label="18" dir="left" />
      <Pin className="left-[711px] top-[472px]" label="8" dir="up" />
      <Pin className="left-[711px] top-[488px]" label="U" />
      <Pin className="left-[316px] top-[360px]" label="11" dir="up" />
      <Pin className="left-[333px] top-[502px]" label="19" dir="down" />
      <Pin className="left-[686px] top-[628px]" label="26" />
    </div>
    <Notes />
  </div>
);

export default App;
